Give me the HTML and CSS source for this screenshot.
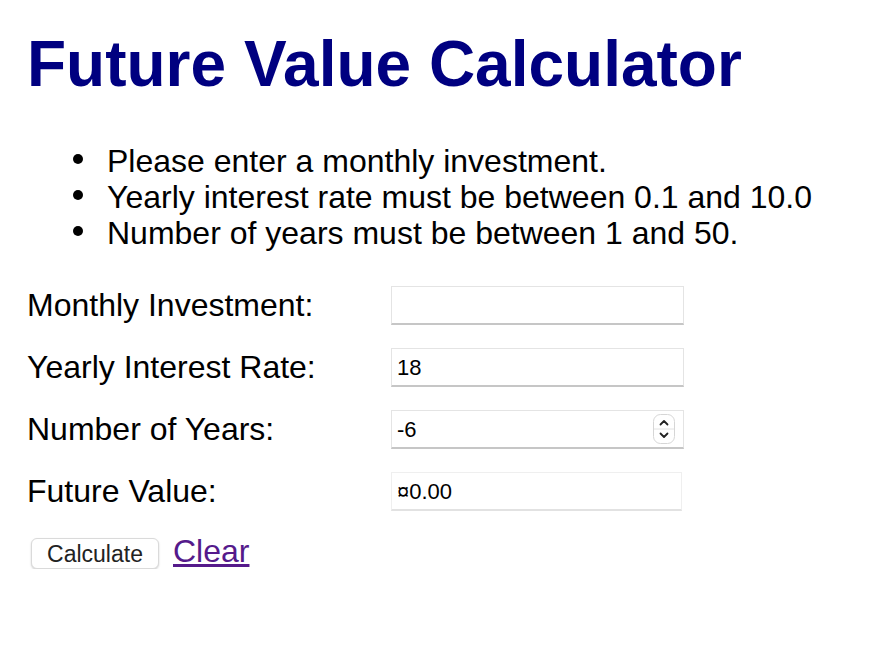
FILE: index.html
```html
<!DOCTYPE html>
<html lang="en">
<head>
<meta charset="utf-8">
<title>Future Value Calculator</title>
<link rel="stylesheet" href="styles.css">
</head>
<body>
<main class="page">
  <h1 class="title">Future Value Calculator</h1>
  <ul class="errors">
    <li>Please enter a monthly investment.</li>
    <li>Yearly interest rate must be between 0.1 and 10.0</li>
    <li>Number of years must be between 1 and 50.</li>
  </ul>
  <form class="form">
    <div class="row">
      <label class="label" for="inv">Monthly Investment:</label>
      <div class="field"><input class="input" id="inv" type="text" value=""></div>
    </div>
    <div class="row">
      <label class="label" for="rate">Yearly Interest Rate:</label>
      <div class="field"><input class="input" id="rate" type="text" value="18"></div>
    </div>
    <div class="row">
      <label class="label" for="years">Number of Years:</label>
      <div class="field">
        <input class="input" id="years" type="text" value="-6">
        <svg class="spinner" width="22" height="30" viewBox="0 0 22 30" aria-hidden="true">
          <rect x="0.5" y="0.5" width="21" height="29" rx="7" ry="7" fill="#fff" stroke="#d6d6d6"/>
          <line x1="1" y1="15" x2="21" y2="15" stroke="#e2e2e2"/>
          <path d="M7.5 10.5 L11 7 L14.5 10.5" fill="none" stroke="#222" stroke-width="1.8" stroke-linecap="round" stroke-linejoin="round"/>
          <path d="M7.5 19.5 L11 23 L14.5 19.5" fill="none" stroke="#222" stroke-width="1.8" stroke-linecap="round" stroke-linejoin="round"/>
        </svg>
      </div>
    </div>
    <div class="row">
      <label class="label" for="fv">Future Value:</label>
      <div class="field field-out"><input class="input" id="fv" type="text" value="¤0.00" readonly></div>
    </div>
    <div class="actions">
      <button class="btn" type="button">Calculate</button>
      <a class="link" href="#">Clear</a>
    </div>
  </form>
</main>
</body>
</html>
```

FILE: styles.css
```css
html, body {
  margin: 0;
  padding: 0;
  background: #fff;
}

body {
  font-family: "Liberation Sans", Arial, Helvetica, sans-serif;
  font-size: 32px;
  color: #000;
}

.page {
  padding: 27px 0 0 27px;
}

.title {
  margin: 0;
  font-size: 64px;
  font-weight: bold;
  line-height: 74px;
  color: #000080;
}

.errors {
  margin: 42px 0 0 0;
  padding-left: 80px;
  line-height: 36px;
  list-style: none;
}

.errors li::before {
  content: "";
  display: inline-block;
  width: 10px;
  height: 10px;
  border-radius: 50%;
  background: #000;
  margin-left: -34px;
  margin-right: 24px;
  vertical-align: 8px;
}

.form {
  margin-top: 34px;
}

.row {
  display: flex;
  align-items: center;
  height: 40px;
  margin-bottom: 22px;
}

.label {
  width: 364px;
  line-height: 36px;
}

.field {
  display: flex;
  align-items: center;
  box-sizing: border-box;
  width: 293px;
  height: 39px;
  border: 1px solid #e4e4e4;
  border-bottom: 2px solid #c6c6c6;
  background: #fff;
  padding: 3px 17px 0 5px;
}

.field-out {
  width: 291px;
  border-color: #efefef;
  border-bottom: 2px solid #e2e2e2;
}

.input {
  flex: 1;
  min-width: 0;
  border: 0;
  outline: none;
  padding: 0;
  margin: 0;
  background: transparent;
  font-family: "Liberation Sans", Arial, Helvetica, sans-serif;
  font-size: 22px;
  color: #000;
}

.spinner {
  flex: none;
  display: block;
  margin: -3px -9px 0 0;
}

.actions {
  display: flex;
  align-items: flex-start;
  margin-top: 27px;
}

.btn {
  box-sizing: border-box;
  margin-left: 4px;
  width: 128px;
  height: 31px;
  border: 1px solid #dadada;
  border-radius: 6px;
  background: #fff;
  box-shadow: 0 1px 2px rgba(0, 0, 0, 0.18);
  font-family: "Liberation Sans", Arial, Helvetica, sans-serif;
  font-size: 23px;
  color: #222;
  padding: 2px 0 0 0;
}

.link {
  margin-left: 14px;
  margin-top: -5px;
  color: #551a8b;
  line-height: 36px;
  text-decoration: underline;
}
```
